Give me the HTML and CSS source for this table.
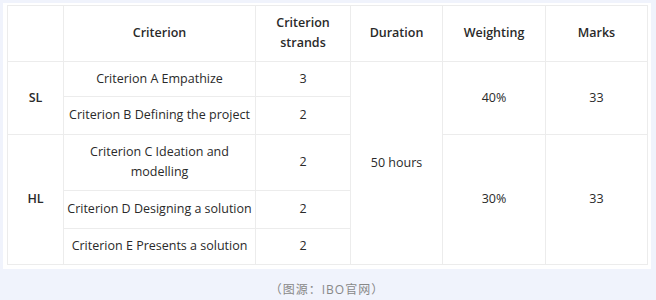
FILE: index.html
```html
<!DOCTYPE html>
<html lang="zh">
<head>
<meta charset="utf-8">
<link rel="stylesheet" href="styles.css">
</head>
<body>
<div class="page">
  <div class="card">
    <table class="grid">
      <colgroup>
        <col class="c1"><col class="c2"><col class="c3"><col class="c4"><col class="c5"><col class="c6">
      </colgroup>
      <thead>
        <tr class="r-head">
          <th></th>
          <th>Criterion</th>
          <th>Criterion<br>strands</th>
          <th>Duration</th>
          <th>Weighting</th>
          <th>Marks</th>
        </tr>
      </thead>
      <tbody>
        <tr class="r-a">
          <th rowspan="2">SL</th>
          <td>Criterion A Empathize</td>
          <td>3</td>
          <td rowspan="5">50 hours</td>
          <td rowspan="2">40%</td>
          <td rowspan="2">33</td>
        </tr>
        <tr class="r-b">
          <td>Criterion B Defining the project</td>
          <td>2</td>
        </tr>
        <tr class="r-c">
          <th rowspan="3">HL</th>
          <td>Criterion C Ideation and<br>modelling</td>
          <td>2</td>
          <td rowspan="3">30%</td>
          <td rowspan="3">33</td>
        </tr>
        <tr class="r-d">
          <td>Criterion D Designing a solution</td>
          <td>2</td>
        </tr>
        <tr class="r-e">
          <td>Criterion E Presents a solution</td>
          <td>2</td>
        </tr>
      </tbody>
    </table>
  </div>
  <p class="caption">（图源：IBO官网）</p>
</div>
</body>
</html>
```
FILE: styles.css
```css
html, body {
  margin: 0;
  padding: 0;
  background: #f0f3fc;
}
.page {
  width: 656px;
  height: 300px;
  padding: 3px 5px 0 3px;
  box-sizing: border-box;
  font-family: "Open Sans", "Noto Sans CJK SC", sans-serif;
  color: #2a2a2a;
}
.card {
  background: #fff;
  padding: 2px 4px 4px 4px;
}
.grid {
  border-collapse: collapse;
  table-layout: fixed;
  width: 640px;
  font-size: 12.5px;
  line-height: 20px;
}
.c1 { width: 56px; }
.c2 { width: 192px; }
.c3 { width: 95px; }
.c4 { width: 92px; }
.c5 { width: 103px; }
.c6 { width: 102px; }
.grid th, .grid td {
  border: 1px solid #ececec;
  text-align: center;
  vertical-align: middle;
  padding: 0 2px 1px;
}
.grid th {
  font-weight: 600;
}
.grid td {
  font-weight: 400;
}
.r-head th {
  padding-bottom: 2px;
}
.r-head { height: 56px; }
.r-a { height: 35px; }
.r-b { height: 38px; }
.r-c { height: 56px; }
.r-d { height: 38px; }
.r-e { height: 36px; }
.caption {
  margin: 13px 0 0 0;
  text-align: center;
  font-size: 12px;
  line-height: 16px;
  color: #888;
  letter-spacing: 1px;
}
```
